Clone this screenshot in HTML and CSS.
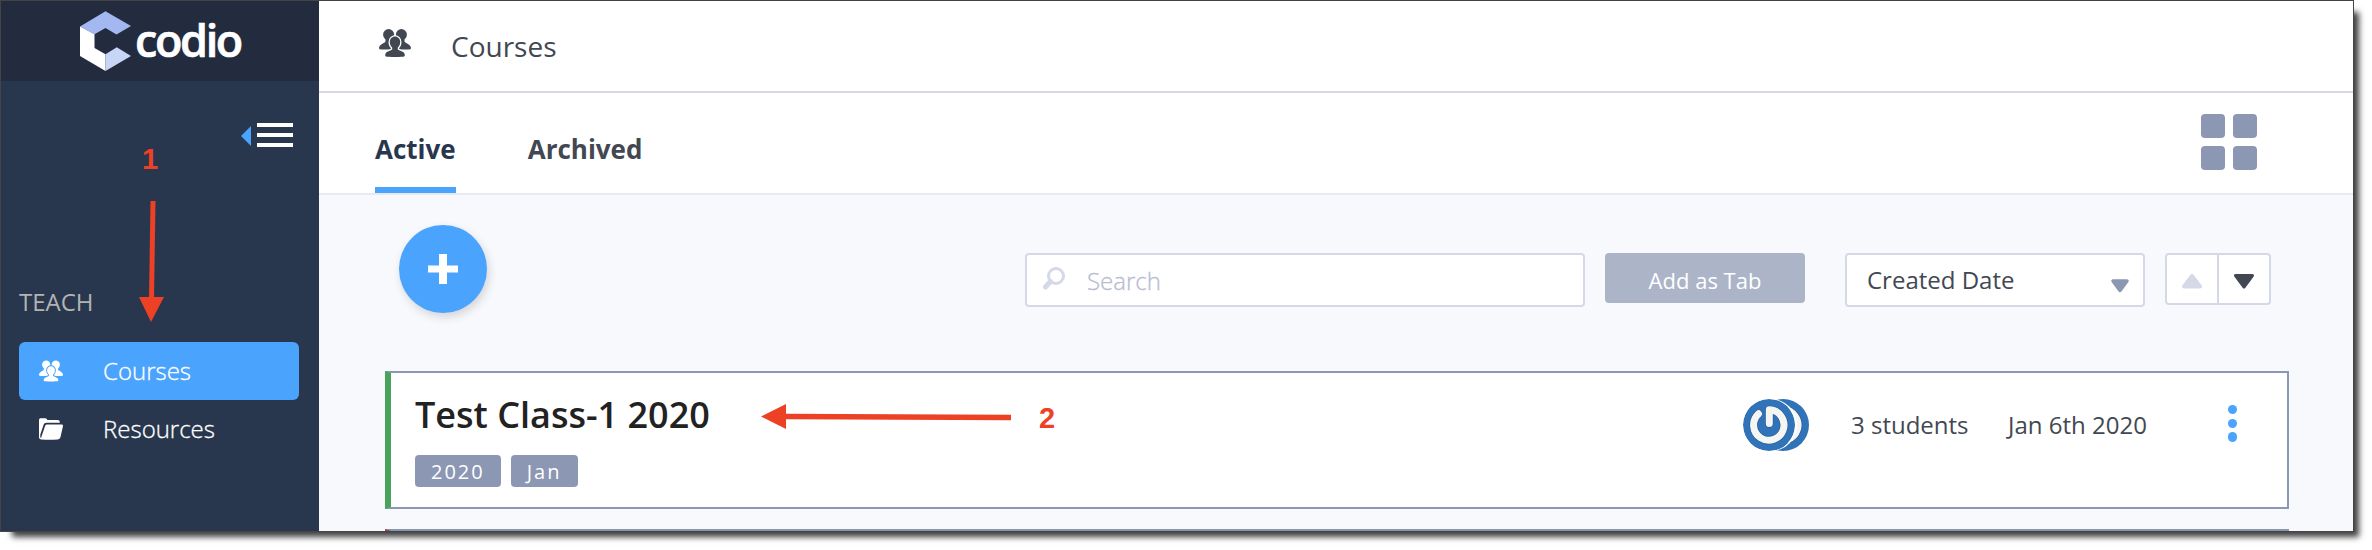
FILE: index.html
```html
<!DOCTYPE html>
<html lang="en">
<head>
<meta charset="utf-8">
<title>Codio - Courses</title>
<link rel="stylesheet" href="styles.css">
</head>
<body>
<svg class="defs" aria-hidden="true">
  <symbol id="people" viewBox="0 0 32 28">
    <g class="person-back">
      <ellipse cx="9.600" cy="5.600" rx="5.500" ry="5.600"/>
      <path d="M6.500 9v3.400C6 14 0 15 0 19.200q0 1.300 2.500 1.300h9l3-9z"/>
      <ellipse cx="22.400" cy="5.600" rx="5.500" ry="5.600"/>
      <path d="M25.500 9v3.400c.5 1.600 6.500 2.600 6.500 6.800q0 1.300-2.500 1.300h-9l-3-9z"/>
    </g>
    <path class="person-front" d="M16 7.600c3 0 5.200 2.300 5.200 5.300 0 2.500-1 4.400-2.400 5.500v2.200c2 1.400 7 1.900 7 5.600 0 1.200-1 1.500-3 1.600q-6.800.5-13.600 0c-2-.1-3-.4-3-1.600 0-3.700 5-4.200 7-5.600v-2.200c-1.400-1.100-2.400-3-2.400-5.500 0-3 2.200-5.300 5.200-5.300z"/>
  </symbol>
  <symbol id="power" viewBox="0 0 52 52">
    <circle cx="26" cy="26" r="26" fill="#3173b8"/>
    <g fill="none" stroke-linecap="round" stroke-linejoin="round">
      <path d="M15.500 14.800A15.200 15.200 0 1 0 26.300 10.800V24.500" stroke="#235e9c" stroke-width="8.300"/>
      <path d="M15.500 14.800A15.200 15.200 0 1 0 26.300 10.800V24.500" stroke="#f5f5f3" stroke-width="7"/>
    </g>
  </symbol>
</svg>

<div class="window">
  <aside class="sidebar">
    <div class="brand">
      <svg class="brand-mark" viewBox="0 0 51 60">
        <path d="M0 15.500 25.500.3 51 15 36.500 23.400 25.500 17 14.500 23.200z" fill="#a3b8f1"/>
        <path d="M0 15.500 14.500 23.200V37L25.500 43.300V60L0 45z" fill="#fff"/>
        <path d="M25.500 43.300 36.800 36.300 51 45 25.500 60z" fill="#c7d5f7"/>
      </svg>
      <span class="brand-name">codio</span>
    </div>
    <div class="collapse">
      <svg width="52" height="24" viewBox="0 0 52 24">
        <path d="M10 3v20L0 13z" fill="#4aa3fc"/>
        <path d="M16 0h36v4H16zM16 10h36v4H16zM16 20h36v4H16z" fill="#fff"/>
      </svg>
    </div>
    <div class="section-label">TEACH</div>
    <nav class="menu">
      <a class="menu-item selected"><svg class="menu-icon"><use href="#people"/></svg>Courses</a>
      <a class="menu-item"><svg class="menu-icon" viewBox="0 0 24 22"><path d="M0 2.200C0 .8.700.2 2 .2h4C7.600.2 8 1 8.300 2.100h10c1.700 0 2.500.8 2.500 2.200v.5H8C5.800 4.800 5 5.600 4.500 7L1.300 16.500v3.300h.8L6 8.300c.4-1.300 1-1.800 2.300-1.800h14c1.400 0 1.900.6 1.600 2l-2.400 10.400c-.5 1.800-1.300 2.300-3 2.500q-8 .9-16 0C.8 21.200 0 20.500 0 19z" fill="#fff"/></svg>Resources</a>
    </nav>
  </aside>

  <main class="main">
    <header class="page-header">
      <svg class="header-icon"><use href="#people"/></svg>
      <h1>Courses</h1>
    </header>
    <div class="tabs">
      <a class="tab active">Active</a>
      <a class="tab">Archived</a>
      <div class="grid-toggle"><i></i><i></i><i></i><i></i></div>
    </div>
    <section class="content">
      <div class="toolbar">
        <button class="add"><svg width="30" height="30" viewBox="0 0 30 30"><path d="M11 0h8v11.500h11v7H19V30h-8V18.500H0v-7h11z" fill="#fff"/></svg></button>
        <div class="search">
          <svg width="22" height="23" viewBox="0 0 22 23"><circle cx="13" cy="9" r="7.500" fill="none" stroke="#d5d9e7" stroke-width="3"/><path d="M7.500 14.500 2.500 20" stroke="#d5d9e7" stroke-width="5" stroke-linecap="round"/></svg>
          <span>Search</span>
        </div>
        <button class="add-tab">Add as Tab</button>
        <div class="select"><span>Created Date</span>
          <svg width="20" height="15" viewBox="0 0 20 15"><path d="M3 2h14L10 11.500z" fill="#8c97b3" stroke="#8c97b3" stroke-width="3.500" stroke-linejoin="round"/></svg>
        </div>
        <div class="sort">
          <span><svg width="22" height="16" viewBox="0 0 22 16"><path d="M3 13.500h16L11 3z" fill="#d5d9e7" stroke="#d5d9e7" stroke-width="4" stroke-linejoin="round"/></svg></span>
          <span><svg width="22" height="16" viewBox="0 0 22 16"><path d="M2.500 2.500h17L11 14z" fill="#424852" stroke="#424852" stroke-width="3" stroke-linejoin="round"/></svg></span>
        </div>
      </div>
      <article class="course">
        <div class="course-info">
          <h2>Test Class-1 2020</h2>
          <div class="tags"><span>2020</span><span>Jan</span></div>
        </div>
        <div class="avatars">
          <svg class="avatar"><use href="#power"/></svg>
          <svg class="avatar front"><use href="#power"/></svg>
        </div>
        <span class="students">3 students</span>
        <span class="date">Jan 6th 2020</span>
        <div class="more"><i></i><i></i><i></i></div>
      </article>
      <article class="course next"></article>
    </section>
  </main>
</div>

<svg class="annotations" width="2372" height="550" viewBox="0 0 2372 550">
  <path d="M153 201 151.500 299" stroke="#ec4125" stroke-width="5"/>
  <path d="M139 297h25l-13 25z"/>
  <path d="M785 416.500 1011 417.500" stroke="#ec4125" stroke-width="5.300"/>
  <path d="M761 416.500 786 404v25z"/>
  <text x="142" y="169">1</text>
  <text x="1039" y="428">2</text>
</svg>
</body>
</html>
```

FILE: styles.css
```css
* { box-sizing: border-box; }
body {
  margin: 0;
  height: 550px;
  overflow: hidden;
  background: #fff;
  font-family: "Open Sans", "Noto Sans", sans-serif;
  color: #424852;
}
h1, h2 { margin: 0; font-weight: 400; }
button { border: 0; padding: 0; font-family: inherit; }
svg { display: block; flex: none; }
.defs { position: absolute; width: 0; height: 0; }

.window {
  display: flex;
  width: 2354px;
  height: 532px;
  overflow: hidden;
  border: 1px solid #444;
  box-shadow: 8.5px 8.5px 6px -3.5px rgba(0, 0, 0, .75);
}

.sidebar { width: 318px; flex: none; background: #29374e; }
.brand {
  display: flex;
  align-items: center;
  height: 80px;
  padding-left: 79px;
  background: #222c3e;
}
.brand-mark { width: 51px; height: 60px; }
.brand-name {
  margin: -3px 0 0 4px;
  font-size: 45px;
  font-weight: 600;
  line-height: 60px;
  letter-spacing: -2.4px;
  -webkit-text-stroke: .7px #fff;
  color: #fff;
}
.collapse { display: flex; justify-content: flex-end; padding: 42px 26px 0 0; }
.section-label {
  margin-top: 138px;
  padding-left: 18px;
  font-size: 24px;
  line-height: 33px;
  color: #b3b3b3;
}
.menu { padding: 24px 20px 0 18px; }
.menu-item {
  display: flex;
  align-items: center;
  height: 58px;
  padding: 0 0 1px 20px;
  border-radius: 6px;
  font-size: 24px;
  font-weight: 300;
  -webkit-text-stroke: .3px #fff;
  color: #fff;
}
.menu-item.selected { background: #4aa3fc; }
.menu-icon { width: 24px; height: 22px; margin-right: 40px; }
.person-back { fill: currentColor; stroke: none; }
.person-front { fill: currentColor; stroke: var(--surface, #4aa3fc); stroke-width: 2.6px; paint-order: stroke; }

.main { flex: 1; display: flex; flex-direction: column; background: #f8f9fd; }
.page-header {
  --surface: #fff;
  display: flex;
  align-items: center;
  height: 92px;
  flex: none;
  padding-left: 60px;
  background: #fff;
  border-bottom: 2px solid #d5d9e7;
}
.header-icon { width: 32px; height: 28px; margin: 0 40px 7px 0; }
h1 { font-size: 28px; }
.tabs {
  display: flex;
  height: 102px;
  flex: none;
  padding: 0 96px 0 56px;
  background: #fff;
  border-bottom: 2px solid #e8eaf3;
}
.tab {
  height: 100px;
  margin-right: 72px;
  padding-top: 38px;
  font-size: 26px;
  font-weight: 700;
  line-height: 36px;
}
.tab.active { color: #29374e; border-bottom: 6px solid #4aa3fc; }
.grid-toggle {
  display: grid;
  grid-template-columns: 24px 24px;
  grid-auto-rows: 24px;
  gap: 8px;
  margin: 21px 0 0 auto;
}
.grid-toggle i { border-radius: 4px; background: #8c97b3; }

.content { padding: 30px 64px 0 66px; }
.toolbar { display: flex; padding: 0 18px 0 14px; height: 146px; align-items: flex-start; }
.add {
  display: grid;
  place-items: center;
  width: 88px;
  height: 88px;
  border-radius: 50%;
  background: #4aa3fc;
  box-shadow: 2px 4px 10px rgba(0, 0, 0, .15);
}
.search, .select, .sort {
  display: flex;
  align-items: center;
  height: 54px;
  margin-top: 28px;
  background: #fff;
  border: 2px solid #d5d9e7;
  border-radius: 4px;
  font-size: 24px;
}
.search { width: 560px; margin-left: auto; padding-left: 16px; font-weight: 300; color: #b6bdd1; }
.search span { -webkit-text-stroke: .3px #b6bdd1; }
.search svg { margin: 0 22px 3px 0; }
.add-tab {
  width: 200px;
  height: 50px;
  margin: 28px 40px 0 20px;
  border-radius: 4px;
  background: #acb4c8;
  font-size: 22px;
  line-height: 50px;
  padding-top: 2px;
  color: #fff;
}
.select { width: 300px; justify-content: space-between; padding: 0 13px 0 20px; }
.select svg { margin-top: 13px; }
.select span { padding-bottom: 1px; }
.sort { width: 106px; height: 52px; margin-left: 20px; }
.sort span { flex: 1; height: 48px; padding-top: 3px; display: grid; place-items: center; }
.sort span + span { border-left: 2px solid #d5d9e7; }

.course {
  display: flex;
  height: 138px;
  background: #fff;
  border: 2px solid #8c97b3;
  border-left: 6px solid #4aa35c;
}
.course.next { margin-top: 20px; border-left-color: #a3424e; }
.course-info { padding: 17px 0 0 24px; width: 1352px; }
h2 { font-size: 36px; font-weight: 600; line-height: 50px; color: #222; }
.tags { display: flex; gap: 10px; margin-top: 15px; }
.tags span {
  height: 32px;
  padding: 0 16px;
  border-radius: 4px;
  background: #8c97b3;
  font-size: 20px;
  line-height: 33px;
  letter-spacing: 2px;
  color: #fff;
}
.avatars { position: relative; width: 66px; margin-top: 26px; height: 52px; }
.avatar { position: absolute; left: 14px; top: 0; width: 52px; height: 52px; }
.avatar.front { left: 0; border-radius: 50%; box-shadow: 2px 0 0 #fff; }
.students, .date { font-size: 24px; line-height: 34px; margin-top: 35px; white-space: nowrap; }
.students { width: 157px; margin-left: 42px; }
.more { display: grid; gap: 4.300px; align-content: start; margin: 32px 50px 0 auto; }
.more i { width: 9.400px; height: 9.400px; border-radius: 50%; background: #4aa3fc; }

.annotations { position: absolute; left: 0; top: 0; fill: #ec4125; }
.annotations text { font: bold 29px "Liberation Sans", sans-serif; }
```
